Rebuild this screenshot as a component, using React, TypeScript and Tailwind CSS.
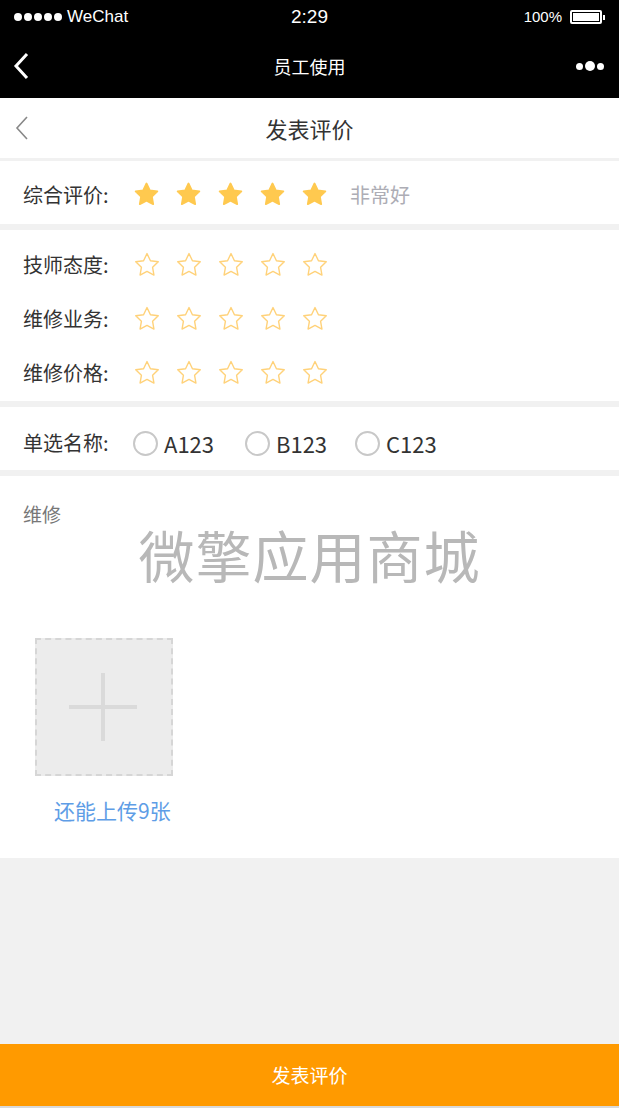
import React from "react";

const CJK = { fontFamily: '"Noto Sans CJK SC", "Noto Sans", sans-serif' };
const STAR = "M12 2.2l2.95 6.1 6.7.95-4.85 4.7 1.15 6.65L12 17.45l-5.95 3.15 1.15-6.65-4.85-4.7 6.7-.95L12 2.2z";

function FilledStar() {
  return (
    <svg width="27" height="27" viewBox="0 0 24 24" className="shrink-0">
      <path d={STAR} fill="#ffc94f" stroke="#ffc94f" strokeWidth="1.6" strokeLinejoin="round" />
    </svg>
  );
}
function OutlineStar() {
  return (
    <svg width="28" height="28" viewBox="0 0 24 24" className="shrink-0">
      <path d={STAR} fill="none" stroke="#ffd27a" strokeWidth="1.2" strokeLinejoin="round" />
    </svg>
  );
}

function Radio({ label, w }: { label: string; w: string }) {
  return (
    <div className={`flex items-center shrink-0 ${w}`}>
      <div className="w-[25px] h-[25px] rounded-full border-2 border-[#c8c8c8] shrink-0" />
      <span className="ml-[6px] text-[22px] text-[#333] leading-none">{label}</span>
    </div>
  );
}

function Label({ children }: { children: React.ReactNode }) {
  return <div className="w-[133px] shrink-0 pl-[23px] text-[20px] text-[#333]">{children}</div>;
}

function RatingRow({ label }: { label: string }) {
  return (
    <div className="h-[54px] flex items-center">
      <Label>{label}</Label>
      <div className="flex gap-[14px]">
        {[0, 1, 2, 3, 4].map((i) => (
          <OutlineStar key={i} />
        ))}
      </div>
    </div>
  );
}

export default function App() {
  return (
    <div className="w-[619px] h-[1108px] flex flex-col bg-[#f1f1f1] overflow-hidden" style={CJK}>
      {/* status bar */}
      <div className="h-[34px] bg-black text-white flex items-center justify-between px-[14px] relative" style={{ fontFamily: '"Liberation Sans", Arial, sans-serif' }}>
        <div className="flex items-center">
          <div className="flex gap-[2px]">
            {[0, 1, 2, 3, 4].map((i) => (
              <div key={i} className="w-[8px] h-[8px] rounded-full bg-white" />
            ))}
          </div>
          <span className="ml-[5px] text-[17px]">WeChat</span>
        </div>
        <div className="absolute left-0 right-0 text-center text-[19px] pointer-events-none">2:29</div>
        <div className="flex items-center">
          <span className="text-[15px]">100%</span>
          <div className="ml-[8px] w-[32px] h-[14px] border-2 border-white rounded-[2px] p-[1px]">
            <div className="w-full h-full bg-white" />
          </div>
          <div className="w-[2px] h-[5px] bg-white ml-[1px]" />
        </div>
      </div>
      {/* nav */}
      <div className="h-[64px] bg-black text-white flex items-center justify-between relative">
        <svg width="20" height="30" viewBox="0 0 20 30" className="ml-[11px]">
          <polyline points="16,3 5,15 16,27" fill="none" stroke="white" strokeWidth="3" />
        </svg>
        <div className="absolute left-0 right-0 text-center text-[18px]">员工使用</div>
        <div className="flex items-center gap-[2px] mr-[15px]">
          <div className="w-[7px] h-[7px] rounded-full bg-white" />
          <div className="w-[10px] h-[10px] rounded-full bg-white" />
          <div className="w-[7px] h-[7px] rounded-full bg-white" />
        </div>
      </div>
      {/* header */}
      <div className="h-[60px] bg-white flex items-center relative">
        <svg width="16" height="26" viewBox="0 0 16 26" className="ml-[14px]">
          <polyline points="13,2 3,13 13,24" fill="none" stroke="#888" strokeWidth="1.6" />
        </svg>
        <div className="absolute left-0 right-0 text-center text-[22px] text-[#333]">发表评价</div>
      </div>
      {/* composite */}
      <div className="h-[63px] mt-[3px] pt-[4px] bg-white flex items-center">
        <Label>综合评价:</Label>
        <div className="flex gap-[15px]">
          {[0, 1, 2, 3, 4].map((i) => (
            <FilledStar key={i} />
          ))}
        </div>
        <span className="ml-[22px] text-[20px] text-[#adadb5]">非常好</span>
      </div>
      {/* ratings */}
      <div className="mt-[6px] bg-white pt-[8px] pb-[1px]">
        <RatingRow label="技师态度:" />
        <RatingRow label="维修业务:" />
        <RatingRow label="维修价格:" />
      </div>
      {/* radios */}
      <div className="h-[63px] mt-[6px] pt-[9px] bg-white flex items-center">
        <Label>单选名称:</Label>
        <Radio label="A123" w="w-[112px]" />
        <Radio label="B123" w="w-[110px]" />
        <Radio label="C123" w="w-[110px]" />
      </div>
      {/* upload */}
      <div className="mt-[6px] bg-white pt-[26px] pb-[34px]">
        <div className="pl-[23px] text-[19px] leading-[24px] text-[#777]">维修</div>
        <div className="text-center text-[56px] leading-[56px] text-[#b8b8b8] tracking-[1px]">微擎应用商城</div>
        <div className="ml-[35px] mt-[56px] w-[138px] h-[138px] bg-[#ececec] border-2 border-dashed border-[#d6d6d6] flex items-center justify-center">
          <svg width="70" height="70" viewBox="0 0 70 70">
            <rect x="0" y="33" width="68" height="4" fill="#dadada" />
            <rect x="32" y="1" width="4" height="68" fill="#dadada" />
          </svg>
        </div>
        <div className="ml-[54px] mt-[20px] text-[21px] leading-[28px] text-[#5e9de6]">还能上传9张</div>
      </div>
      <div className="flex-1" />
      {/* button */}
      <div className="h-[62px] bg-[#ff9a00] text-white text-[19px] flex items-center justify-center">发表评价</div>
      <div className="h-[2px] bg-[#d9d9d9]" />
    </div>
  );
}
